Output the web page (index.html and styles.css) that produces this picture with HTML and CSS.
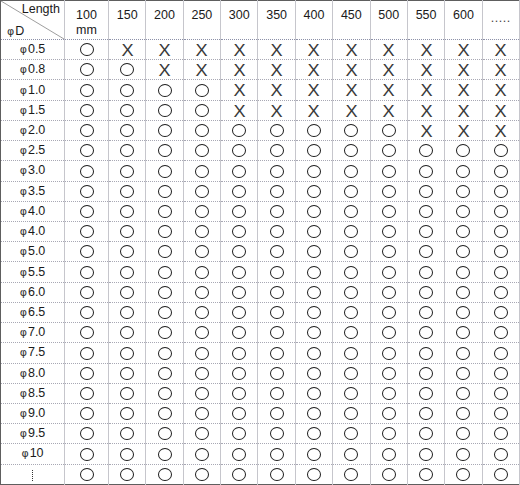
FILE: index.html
```html
<!DOCTYPE html>
<html>
<head>
<meta charset="utf-8">
<link rel="stylesheet" href="styles.css">
</head>
<body>
<table class="grid">
<colgroup><col class="c-label"><col class="c-first"><col span="11"></colgroup>
<thead>
<tr class="head">
<th class="corner">
<svg class="diag" viewBox="0 0 64 40" preserveAspectRatio="none"><line x1="0" y1="0" x2="64" y2="40"/></svg>
<div class="len">Length</div>
<div class="dia"><span class="phi">φ</span>D</div>
</th>
<th>100<br>mm</th><th>150</th><th>200</th><th>250</th><th>300</th><th>350</th><th>400</th><th>450</th><th>500</th><th>550</th><th>600</th><th class="more">.....</th>
</tr>
</thead>
<tbody>
<tr><td class="lbl"><span class="phi">φ</span>0.5</td><td><i class="o"></i></td><td><b class="x">X</b></td><td><b class="x">X</b></td><td><b class="x">X</b></td><td><b class="x">X</b></td><td><b class="x">X</b></td><td><b class="x">X</b></td><td><b class="x">X</b></td><td><b class="x">X</b></td><td><b class="x">X</b></td><td><b class="x">X</b></td><td><b class="x">X</b></td></tr>
<tr><td class="lbl"><span class="phi">φ</span>0.8</td><td><i class="o"></i></td><td><i class="o"></i></td><td><b class="x">X</b></td><td><b class="x">X</b></td><td><b class="x">X</b></td><td><b class="x">X</b></td><td><b class="x">X</b></td><td><b class="x">X</b></td><td><b class="x">X</b></td><td><b class="x">X</b></td><td><b class="x">X</b></td><td><b class="x">X</b></td></tr>
<tr><td class="lbl"><span class="phi">φ</span>1.0</td><td><i class="o"></i></td><td><i class="o"></i></td><td><i class="o"></i></td><td><i class="o"></i></td><td><b class="x">X</b></td><td><b class="x">X</b></td><td><b class="x">X</b></td><td><b class="x">X</b></td><td><b class="x">X</b></td><td><b class="x">X</b></td><td><b class="x">X</b></td><td><b class="x">X</b></td></tr>
<tr><td class="lbl"><span class="phi">φ</span>1.5</td><td><i class="o"></i></td><td><i class="o"></i></td><td><i class="o"></i></td><td><i class="o"></i></td><td><b class="x">X</b></td><td><b class="x">X</b></td><td><b class="x">X</b></td><td><b class="x">X</b></td><td><b class="x">X</b></td><td><b class="x">X</b></td><td><b class="x">X</b></td><td><b class="x">X</b></td></tr>
<tr><td class="lbl"><span class="phi">φ</span>2.0</td><td><i class="o"></i></td><td><i class="o"></i></td><td><i class="o"></i></td><td><i class="o"></i></td><td><i class="o"></i></td><td><i class="o"></i></td><td><i class="o"></i></td><td><i class="o"></i></td><td><i class="o"></i></td><td><b class="x">X</b></td><td><b class="x">X</b></td><td><b class="x">X</b></td></tr>
<tr><td class="lbl"><span class="phi">φ</span>2.5</td><td><i class="o"></i></td><td><i class="o"></i></td><td><i class="o"></i></td><td><i class="o"></i></td><td><i class="o"></i></td><td><i class="o"></i></td><td><i class="o"></i></td><td><i class="o"></i></td><td><i class="o"></i></td><td><i class="o"></i></td><td><i class="o"></i></td><td><i class="o"></i></td></tr>
<tr><td class="lbl"><span class="phi">φ</span>3.0</td><td><i class="o"></i></td><td><i class="o"></i></td><td><i class="o"></i></td><td><i class="o"></i></td><td><i class="o"></i></td><td><i class="o"></i></td><td><i class="o"></i></td><td><i class="o"></i></td><td><i class="o"></i></td><td><i class="o"></i></td><td><i class="o"></i></td><td><i class="o"></i></td></tr>
<tr><td class="lbl"><span class="phi">φ</span>3.5</td><td><i class="o"></i></td><td><i class="o"></i></td><td><i class="o"></i></td><td><i class="o"></i></td><td><i class="o"></i></td><td><i class="o"></i></td><td><i class="o"></i></td><td><i class="o"></i></td><td><i class="o"></i></td><td><i class="o"></i></td><td><i class="o"></i></td><td><i class="o"></i></td></tr>
<tr><td class="lbl"><span class="phi">φ</span>4.0</td><td><i class="o"></i></td><td><i class="o"></i></td><td><i class="o"></i></td><td><i class="o"></i></td><td><i class="o"></i></td><td><i class="o"></i></td><td><i class="o"></i></td><td><i class="o"></i></td><td><i class="o"></i></td><td><i class="o"></i></td><td><i class="o"></i></td><td><i class="o"></i></td></tr>
<tr><td class="lbl"><span class="phi">φ</span>4.0</td><td><i class="o"></i></td><td><i class="o"></i></td><td><i class="o"></i></td><td><i class="o"></i></td><td><i class="o"></i></td><td><i class="o"></i></td><td><i class="o"></i></td><td><i class="o"></i></td><td><i class="o"></i></td><td><i class="o"></i></td><td><i class="o"></i></td><td><i class="o"></i></td></tr>
<tr><td class="lbl"><span class="phi">φ</span>5.0</td><td><i class="o"></i></td><td><i class="o"></i></td><td><i class="o"></i></td><td><i class="o"></i></td><td><i class="o"></i></td><td><i class="o"></i></td><td><i class="o"></i></td><td><i class="o"></i></td><td><i class="o"></i></td><td><i class="o"></i></td><td><i class="o"></i></td><td><i class="o"></i></td></tr>
<tr><td class="lbl"><span class="phi">φ</span>5.5</td><td><i class="o"></i></td><td><i class="o"></i></td><td><i class="o"></i></td><td><i class="o"></i></td><td><i class="o"></i></td><td><i class="o"></i></td><td><i class="o"></i></td><td><i class="o"></i></td><td><i class="o"></i></td><td><i class="o"></i></td><td><i class="o"></i></td><td><i class="o"></i></td></tr>
<tr><td class="lbl"><span class="phi">φ</span>6.0</td><td><i class="o"></i></td><td><i class="o"></i></td><td><i class="o"></i></td><td><i class="o"></i></td><td><i class="o"></i></td><td><i class="o"></i></td><td><i class="o"></i></td><td><i class="o"></i></td><td><i class="o"></i></td><td><i class="o"></i></td><td><i class="o"></i></td><td><i class="o"></i></td></tr>
<tr><td class="lbl"><span class="phi">φ</span>6.5</td><td><i class="o"></i></td><td><i class="o"></i></td><td><i class="o"></i></td><td><i class="o"></i></td><td><i class="o"></i></td><td><i class="o"></i></td><td><i class="o"></i></td><td><i class="o"></i></td><td><i class="o"></i></td><td><i class="o"></i></td><td><i class="o"></i></td><td><i class="o"></i></td></tr>
<tr><td class="lbl"><span class="phi">φ</span>7.0</td><td><i class="o"></i></td><td><i class="o"></i></td><td><i class="o"></i></td><td><i class="o"></i></td><td><i class="o"></i></td><td><i class="o"></i></td><td><i class="o"></i></td><td><i class="o"></i></td><td><i class="o"></i></td><td><i class="o"></i></td><td><i class="o"></i></td><td><i class="o"></i></td></tr>
<tr><td class="lbl"><span class="phi">φ</span>7.5</td><td><i class="o"></i></td><td><i class="o"></i></td><td><i class="o"></i></td><td><i class="o"></i></td><td><i class="o"></i></td><td><i class="o"></i></td><td><i class="o"></i></td><td><i class="o"></i></td><td><i class="o"></i></td><td><i class="o"></i></td><td><i class="o"></i></td><td><i class="o"></i></td></tr>
<tr><td class="lbl"><span class="phi">φ</span>8.0</td><td><i class="o"></i></td><td><i class="o"></i></td><td><i class="o"></i></td><td><i class="o"></i></td><td><i class="o"></i></td><td><i class="o"></i></td><td><i class="o"></i></td><td><i class="o"></i></td><td><i class="o"></i></td><td><i class="o"></i></td><td><i class="o"></i></td><td><i class="o"></i></td></tr>
<tr><td class="lbl"><span class="phi">φ</span>8.5</td><td><i class="o"></i></td><td><i class="o"></i></td><td><i class="o"></i></td><td><i class="o"></i></td><td><i class="o"></i></td><td><i class="o"></i></td><td><i class="o"></i></td><td><i class="o"></i></td><td><i class="o"></i></td><td><i class="o"></i></td><td><i class="o"></i></td><td><i class="o"></i></td></tr>
<tr><td class="lbl"><span class="phi">φ</span>9.0</td><td><i class="o"></i></td><td><i class="o"></i></td><td><i class="o"></i></td><td><i class="o"></i></td><td><i class="o"></i></td><td><i class="o"></i></td><td><i class="o"></i></td><td><i class="o"></i></td><td><i class="o"></i></td><td><i class="o"></i></td><td><i class="o"></i></td><td><i class="o"></i></td></tr>
<tr><td class="lbl"><span class="phi">φ</span>9.5</td><td><i class="o"></i></td><td><i class="o"></i></td><td><i class="o"></i></td><td><i class="o"></i></td><td><i class="o"></i></td><td><i class="o"></i></td><td><i class="o"></i></td><td><i class="o"></i></td><td><i class="o"></i></td><td><i class="o"></i></td><td><i class="o"></i></td><td><i class="o"></i></td></tr>
<tr><td class="lbl"><span class="phi">φ</span>10</td><td><i class="o"></i></td><td><i class="o"></i></td><td><i class="o"></i></td><td><i class="o"></i></td><td><i class="o"></i></td><td><i class="o"></i></td><td><i class="o"></i></td><td><i class="o"></i></td><td><i class="o"></i></td><td><i class="o"></i></td><td><i class="o"></i></td><td><i class="o"></i></td></tr>
<tr><td class="lbl"><span class="vdots"></span></td><td><i class="o"></i></td><td><i class="o"></i></td><td><i class="o"></i></td><td><i class="o"></i></td><td><i class="o"></i></td><td><i class="o"></i></td><td><i class="o"></i></td><td><i class="o"></i></td><td><i class="o"></i></td><td><i class="o"></i></td><td><i class="o"></i></td><td><i class="o"></i></td></tr>
</tbody>
</table>
</body>
</html>
```

FILE: styles.css
```css
html, body {
  margin: 0;
  padding: 0;
  background: #ffffff;
}

.grid {
  width: 520px;
  height: 485px;
  border-collapse: collapse;
  table-layout: fixed;
  border: 1px solid #5e5e5e;
  font-family: "Liberation Sans", Arial, sans-serif;
  font-size: 12px;
  color: #1a1a1a;
}

.c-label { width: 64px; }
.c-first { width: 44px; }

.grid th,
.grid td {
  padding: 0;
  text-align: center;
  border-left: 1px solid #c6c6cc;
  border-right: 1px solid #c6c6cc;
  border-top: 1px dotted #a8a8b4;
  border-bottom: 1px dotted #a8a8b4;
}

.head {
  height: 39px;
}

.head th {
  font-weight: normal;
  vertical-align: top;
  padding-top: 7px;
  line-height: 15px;
  font-size: 12.5px;
  border-bottom: 1px dotted #8c90a8;
}

.head th.more {
  padding-top: 10px;
  letter-spacing: 0.5px;
  color: #444;
}

.grid .corner {
  position: relative;
  padding: 0;
  text-align: left;
  border-left: none;
}

.diag {
  position: absolute;
  left: 0;
  top: 0;
  width: 100%;
  height: 100%;
}

.diag line {
  stroke: #9a9a9a;
  stroke-width: 1;
}

.len {
  text-align: right;
  padding: 1px 4px 0 0;
  line-height: 14px;
  font-size: 12.5px;
}

.dia {
  padding: 8px 0 0 6px;
  line-height: 14px;
  font-size: 12.5px;
}

.phi {
  font-family: "DejaVu Sans", sans-serif;
  font-size: 11px;
  margin-right: 1px;
  color: #333;
}

.grid td.lbl {
  border-left: none;
  font-size: 12.5px;
  line-height: 14px;
}

.grid tbody tr {
  height: 20px;
}

.grid td {
  vertical-align: middle;
  line-height: 12px;
}

.o {
  display: inline-block;
  width: 12px;
  height: 11px;
  border: 1.2px solid #1e1e1e;
  border-radius: 50%;
  vertical-align: middle;
}

.x {
  display: inline-block;
  font-weight: normal;
  font-size: 16.5px;
  line-height: 12px;
  color: #3a3a3a;
  vertical-align: middle;
  transform: scaleX(1.1);
}

.vdots {
  display: inline-block;
  width: 0;
  height: 11px;
  border-left: 1.5px dotted #333;
  vertical-align: middle;
}

.grid tbody tr:last-child td {
  border-bottom: none;
}
```
